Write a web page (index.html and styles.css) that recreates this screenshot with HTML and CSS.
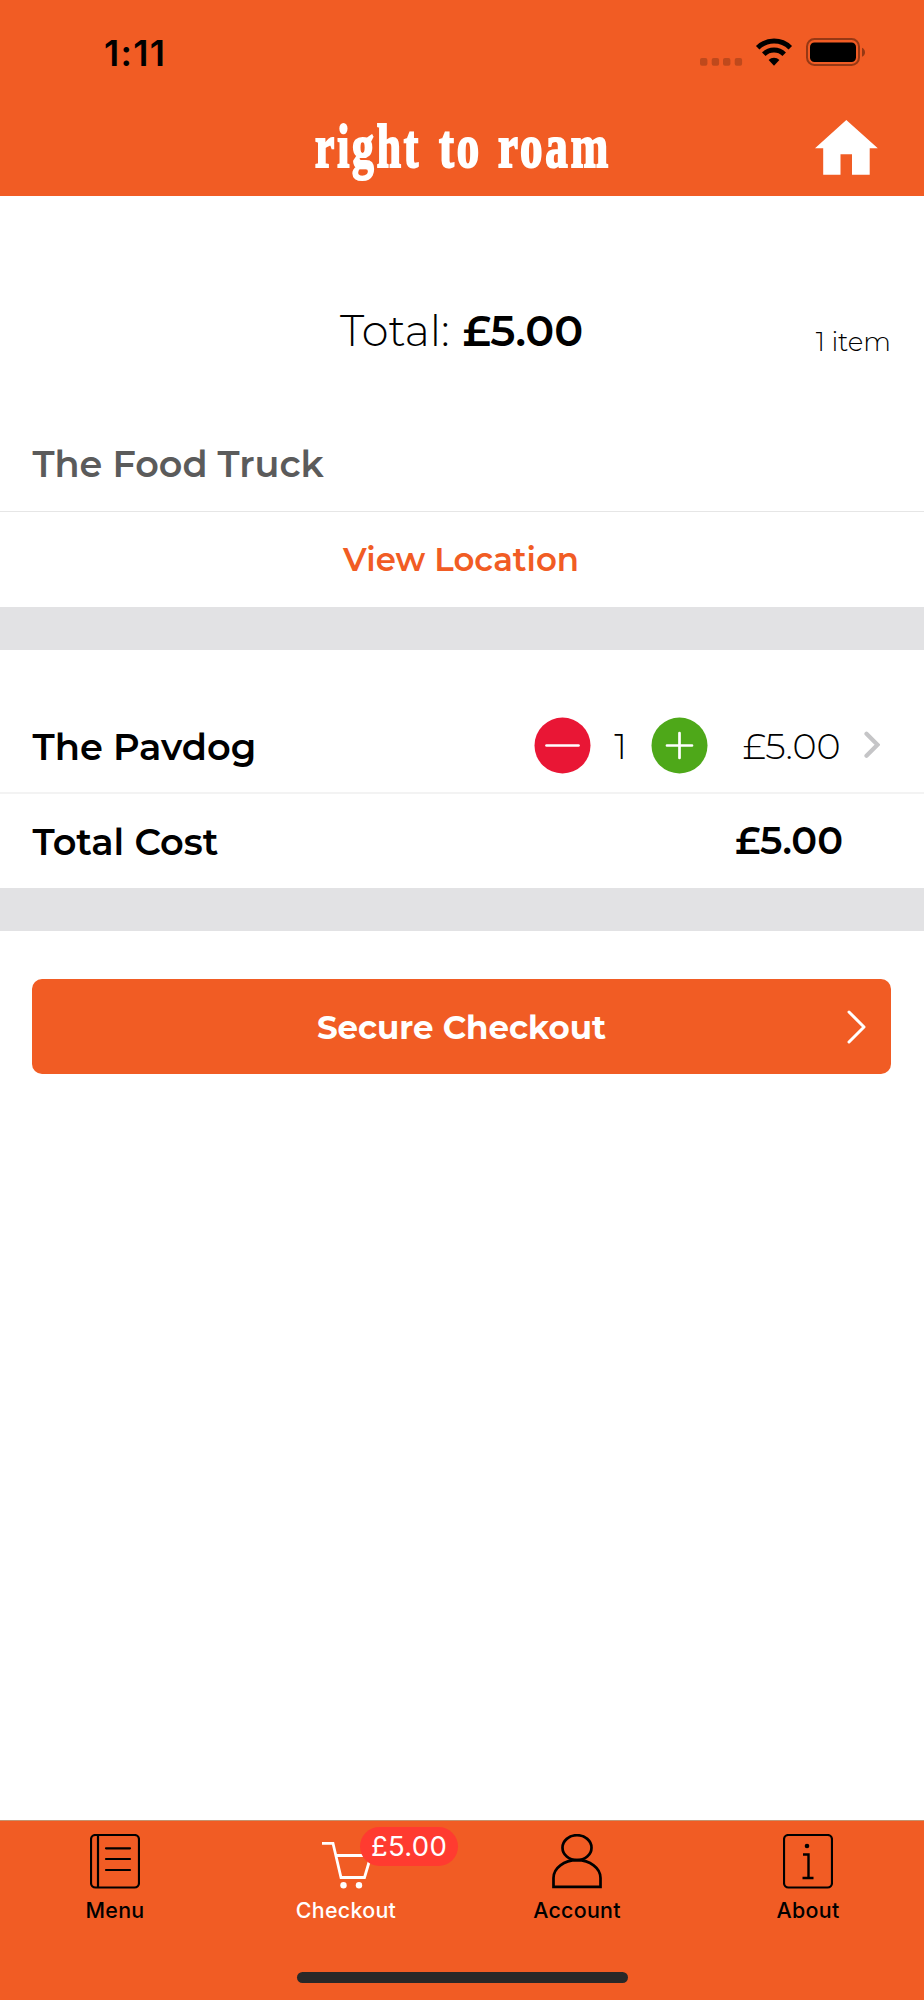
FILE: index.html
```html
<!DOCTYPE html>
<html lang="en">
<head>
<meta charset="utf-8">
<title>Right to Roam – Checkout</title>
<link rel="stylesheet" href="styles.css">
</head>
<body>
<div class="app">
  <header class="header">
    <div class="status">
      <span class="time">1:11</span>
      <svg class="status-icons" width="168" height="32" viewBox="0 0 168 32">
        <g fill="#bf491c"><rect x="0" y="22" width="7.4" height="7.8" rx="2"/><rect x="11.7" y="22" width="7.4" height="7.8" rx="2"/><rect x="23" y="22" width="7.4" height="7.8" rx="2"/><rect x="34.7" y="22" width="7.4" height="7.8" rx="2"/></g>
        <g fill="none" stroke="#000" stroke-width="5"><path d="M57.7 11.700a23.3 23.3 0 0 1 32.6 0"/><path d="M63.8 18.200a14.6 14.6 0 0 1 20.4 0"/></g>
        <path d="M68.600 24a7.700 7.700 0 0 1 10.800 0L74 29.700z" fill="#000"/>
        <rect x="107" y="3" width="52" height="26" rx="7.500" fill="none" stroke="#963814" stroke-width="2"/>
        <rect x="110" y="6.500" width="46" height="19.500" rx="4.500"/>
        <path d="M162 11.800q3 1.500 3 4.500t-3 4.500z" fill="#963814"/>
      </svg>
    </div>
    <div class="brand">
      <svg class="logo" width="304" height="92" viewBox="0 0 304 92">
        <g class="logo-text">
          <text x="2" y="62.500" textLength="106" lengthAdjust="spacingAndGlyphs">right</text>
          <text x="126" y="62.500" textLength="43" lengthAdjust="spacingAndGlyphs">to</text>
          <text x="185" y="62.500" textLength="113" lengthAdjust="spacingAndGlyphs">roam</text>
        </g>
      </svg>
      <svg class="home" width="63" height="56" viewBox="0 0 63 56"><path fill="#fff" d="M31.300 0 62.800 28.300H54.700V54.700H37V34.200H25.500V54.700H8.200V28.300H0z"/></svg>
    </div>
  </header>
  <main class="content">
    <section class="summary">
      <p class="sum"><span class="sum-label">Total:</span><strong class="sum-value">£5.00</strong></p>
      <span class="count">1 item</span>
    </section>
    <h2 class="vendor">The Food Truck</h2>
    <a class="location"><span>View Location</span></a>
    <div class="band"></div>
    <div class="item">
      <span class="name">The Pavdog</span>
      <svg class="round" width="57" height="57" viewBox="0 0 57 57"><circle cx="28.500" cy="28.500" r="28" fill="#e91635"/><path d="M12.500 28.500h32" stroke="#fff" stroke-width="2.700" stroke-linecap="round"/></svg>
      <span class="qty">1</span>
      <svg class="round" width="57" height="57" viewBox="0 0 57 57"><circle cx="28.500" cy="28.500" r="28" fill="#4ea819"/><path d="M16 28.500h25M28.500 16v25" stroke="#fff" stroke-width="2.700" stroke-linecap="round"/></svg>
      <span class="price">£5.00</span>
      <svg class="more" width="16" height="28" viewBox="0 0 16 28"><path d="M2.500 2.800 13.500 13.800 2.500 24.800" fill="none" stroke="#c5c5c7" stroke-width="4.200" stroke-linecap="round"/></svg>
    </div>
    <div class="total">
      <span class="name">Total Cost</span>
      <strong class="total-value">£5.00</strong>
    </div>
    <div class="band"></div>
    <button class="checkout"><span>Secure Checkout</span>
      <svg class="go" width="19" height="34" viewBox="0 0 19 34"><path d="M2 2 17 17 2 32" fill="none" stroke="#fff" stroke-width="3" stroke-linecap="round" stroke-linejoin="round"/></svg>
    </button>
  </main>
  <nav class="tabs">
    <a class="tab">
      <svg width="50" height="56" viewBox="0 0 50 56" fill="none" stroke="#000" stroke-width="2.200"><rect x="1" y="1" width="48" height="52.500" rx="4.500"/><path d="M8 1v52.500"/><path d="M16 14.300h24M16 25h24M16 36h24" stroke-linecap="round"/></svg>
      <span>Menu</span>
    </a>
    <a class="tab active">
      <span class="cart">
        <svg width="50" height="56" viewBox="0 0 50 56" fill="none" stroke="#fff" stroke-width="2.800"><path d="M1 9.300h11L20 43.500h23.500l6.500-22H15"/><g fill="#fff" stroke="none"><circle cx="22.500" cy="51.200" r="3.200"/><circle cx="38" cy="51.200" r="3.200"/></g></svg>
        <span class="badge">£5.00</span>
      </span>
      <span>Checkout</span>
    </a>
    <a class="tab">
      <svg width="50" height="56" viewBox="0 0 50 56" fill="none" stroke="#000" stroke-width="2.700"><ellipse cx="25" cy="13.700" rx="14.500" ry="12.500"/><path d="M1.500 52.800V44C1.500 34 12 26.200 25 26.200S48.500 34 48.500 44v8.800z"/></svg>
      <span>Account</span>
    </a>
    <a class="tab">
      <svg width="50" height="56" viewBox="0 0 50 56" fill="none" stroke="#000" stroke-width="2.200"><rect x="1" y="1" width="48" height="52.500" rx="4.500"/><path d="M20 20.500h5.500v23.500M19.500 44h11" stroke-width="2.400"/><circle cx="24" cy="12" r="2.300" fill="#000" stroke="none"/></svg>
      <span>About</span>
    </a>
    <div class="indicator"></div>
  </nav>
</div>
</body>
</html>
```
FILE: styles.css
```css
* { box-sizing: border-box; }
body { margin: 0; background: #fff; color: #000; font-family: Montserrat, Inter, sans-serif; }
.app { width: 924px; height: 2000px; display: flex; flex-direction: column; }
.header { height: 196px; background: #f15c24; flex: none; }
.status { height: 104px; padding: 0 56px 0 104px; display: flex; justify-content: space-between; align-items: center; }
.time { font: 600 36px/40px Inter, sans-serif; letter-spacing: 1.3px; padding-top: 2px; }
.brand { height: 92px; padding: 0 46px 0 313px; display: flex; justify-content: space-between; }
.logo-text { font: bold 62px "Liberation Serif", serif; letter-spacing: 4px; fill: #fff; stroke: #fff; stroke-width: 2.2px; }
.home { margin-top: 16px; }
.content { flex: 1; }
.summary { height: 218px; padding: 114px 33px 0 340px; display: flex; justify-content: space-between; }
.sum { margin: 0; display: flex; gap: 13px; font-size: 43px; line-height: 42px; height: 42px; }
.sum-label { font-weight: 300; }
.sum-value { font-weight: 600; }
.count { font-size: 26px; font-weight: 300; line-height: 64px; height: 64px; }
.vendor { margin: 0; height: 98px; padding: 28px 32.5px 0; font-size: 36.6px; line-height: 44px; font-weight: 600; color: #5b5b5b; border-bottom: 1px solid #e6e6e6; }
.location { height: 95px; padding-right: 2px; display: flex; align-items: center; justify-content: center; color: #f15c24; font-size: 32.4px; font-weight: 600; }
.band { height: 43px; background: #e2e2e4; }
.item { height: 144px; padding: 48px 44px 0 32.5px; display: flex; align-items: center; border-bottom: 2px solid #f3f3f3; }
.name { font-size: 36.8px; font-weight: 600; }
.item .name { width: 501.5px; padding-top: 2px; }
.round { flex: none; }
.qty { width: 59px; margin-right: 1px; text-align: center; font-size: 36px; font-weight: 300; padding-top: 2px; }
.price { width: 132.5px; text-align: right; font-size: 36.5px; font-weight: 300; padding-top: 1px; }
.more { margin-left: auto; }
.total { height: 94px; padding: 0 81px 0 32.5px; display: flex; align-items: center; justify-content: space-between; }
.total-value { font-size: 38.4px; font-weight: 600; padding-bottom: 2px; }
.checkout { width: 859px; height: 95px; margin: 48px 0 0 32px; padding: 0 25px; border: 0; border-radius: 10px; background: #f15c24; color: #fff; font: 700 32.4px/40px Montserrat, Inter, sans-serif; display: flex; align-items: center; }
.checkout span { flex: 1; text-align: center; padding: 2px 0 0 19px; }
.tabs { height: 180px; flex: none; background: #f15c24; border-top: 1px solid #c4926f; display: grid; grid-template-columns: repeat(4, 231px); grid-template-rows: 151px 11px; }
.tab { display: flex; flex-direction: column; align-items: center; padding: 13px 1px 0 0; font: 500 21.4px/28px Inter, sans-serif; letter-spacing: .3px; }
.tab > span:last-child { margin-top: 6px; }
.active { color: #fff; }
.cart { position: relative; height: 56px; }
.badge { position: absolute; left: 39px; top: -7px; width: 98px; height: 39px; border-radius: 20px; background: #ff3b30; font: 400 27.5px/39px Inter, sans-serif; text-align: center; }
.indicator { grid-column: 1 / -1; justify-self: center; width: 331px; background: #282828; border-radius: 6px; }
```
